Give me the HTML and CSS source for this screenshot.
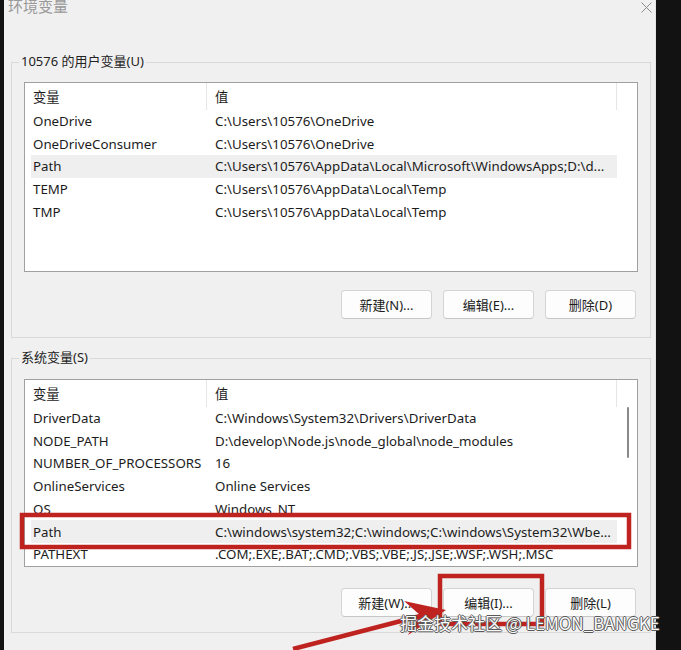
FILE: index.html
```html
<!DOCTYPE html>
<html lang="zh-CN">
<head>
<meta charset="utf-8">
<title>环境变量</title>
<link rel="stylesheet" href="styles.css">
</head>
<body>
<div class="window">
  <div class="titlebar">
    <span class="title">环境变量</span>
    <svg class="close" width="11" height="11" viewBox="0 0 11 11"><path d="M0.5 0.5 L10.5 10.5 M10.5 0.5 L0.5 10.5" stroke="#8c8c8c" stroke-width="1" fill="none"/></svg>
  </div>

  <div class="group group-user">
    <div class="legend">10576 的用户变量(U)</div>
    <div class="list list-user">
      <div class="list-head">
        <div class="hcell hcell-name">变量</div>
        <div class="hcell hcell-value">值</div>
      </div>
      <div class="list-body">
        <div class="rows">
          <div class="row"><span class="c1">OneDrive</span><span class="c2">C:\Users\10576\OneDrive</span></div>
          <div class="row"><span class="c1">OneDriveConsumer</span><span class="c2">C:\Users\10576\OneDrive</span></div>
          <div class="row sel"><span class="c1">Path</span><span class="c2">C:\Users\10576\AppData\Local\Microsoft\WindowsApps;D:\d...</span></div>
          <div class="row"><span class="c1">TEMP</span><span class="c2">C:\Users\10576\AppData\Local\Temp</span></div>
          <div class="row"><span class="c1">TMP</span><span class="c2">C:\Users\10576\AppData\Local\Temp</span></div>
        </div>
        <div class="scroll"></div>
      </div>
    </div>
    <div class="buttons buttons-user">
      <button class="btn">新建(N)...</button>
      <button class="btn">编辑(E)...</button>
      <button class="btn">删除(D)</button>
    </div>
  </div>

  <div class="group group-sys">
    <div class="legend">系统变量(S)</div>
    <div class="list list-sys">
      <div class="list-head">
        <div class="hcell hcell-name">变量</div>
        <div class="hcell hcell-value">值</div>
      </div>
      <div class="list-body">
        <div class="rows">
          <div class="row"><span class="c1">DriverData</span><span class="c2">C:\Windows\System32\Drivers\DriverData</span></div>
          <div class="row"><span class="c1">NODE_PATH</span><span class="c2">D:\develop\Node.js\node_global\node_modules</span></div>
          <div class="row"><span class="c1">NUMBER_OF_PROCESSORS</span><span class="c2">16</span></div>
          <div class="row"><span class="c1">OnlineServices</span><span class="c2">Online Services</span></div>
          <div class="row"><span class="c1">OS</span><span class="c2">Windows_NT</span></div>
          <div class="row sel"><span class="c1">Path</span><span class="c2">C:\windows\system32;C:\windows;C:\windows\System32\Wbe...</span></div>
          <div class="row"><span class="c1">PATHEXT</span><span class="c2">.COM;.EXE;.BAT;.CMD;.VBS;.VBE;.JS;.JSE;.WSF;.WSH;.MSC</span></div>
        </div>
        <div class="scroll"><div class="thumb"></div></div>
      </div>
    </div>
    <div class="buttons buttons-sys">
      <button class="btn">新建(W)...</button>
      <button class="btn">编辑(I)...</button>
      <button class="btn">删除(L)</button>
    </div>
  </div>
</div>

<svg class="annot" width="681" height="650" viewBox="0 0 681 650">
  <rect x="22" y="515" width="607" height="32" fill="none" stroke="#bf2320" stroke-width="4.5"/>
  <rect x="440" y="576" width="102" height="48" fill="none" stroke="#bf2320" stroke-width="4.5"/>
  <line x1="293" y1="649" x2="428" y2="614" stroke="#bf2320" stroke-width="4.5"/>
  <polygon points="446,610 404,601 420,615 408,635" fill="#bf2320"/>
</svg>
<div class="watermark">掘金技术社区 @ LEMON_BANGKE</div>
</body>
</html>
```
FILE: styles.css
```css
html, body {
  margin: 0;
  padding: 0;
}
body {
  width: 681px;
  height: 650px;
  overflow: hidden;
  position: relative;
  background: #121212;
  font-family: "Noto Sans", "Noto Sans CJK SC", sans-serif;
  font-size: 13px;
  color: #1c1c1c;
}
.window {
  margin-left: 4px;
  width: 652px;
  height: 650px;
  background: #f0f0f0;
  box-sizing: border-box;
  border-right: 1px solid #e4e4e4;
}
.titlebar {
  height: 62px;
  display: flex;
  justify-content: space-between;
  align-items: flex-start;
}
.title {
  margin-top: -4px;
  margin-left: 4px;
  font-size: 15px;
  line-height: 20px;
  color: #9a9a9a;
}
.close {
  margin-top: 2px;
  margin-right: 3px;
}
.group {
  margin-left: 7px;
  width: 640px;
  box-sizing: border-box;
  border: 1px solid #d9d9d9;
  padding: 0 12px;
}
.group-user {
  padding-bottom: 18px;
}
.group-sys {
  margin-top: 20px;
  padding-bottom: 15px;
}
.legend {
  display: block;
  width: fit-content;
  margin-top: -10px;
  margin-left: -5px;
  padding: 0 2px;
  height: 16px;
  line-height: 16px;
  background: #f0f0f0;
  color: #222;
}
.list {
  width: 614px;
  box-sizing: border-box;
  border: 1px solid #a0a0a0;
  background: #fff;
  overflow: hidden;
  font-size: 13.3px;
}
.list-user {
  margin-top: 13px;
  height: 190px;
}
.list-sys {
  margin-top: 14px;
  height: 188px;
}
.list-head {
  display: flex;
  height: 26.5px;
}
.hcell {
  box-sizing: border-box;
  padding-left: 8px;
  display: flex;
  align-items: center;
  border-right: 1px solid #e6e6e6;
}
.hcell-name {
  width: 182px;
}
.hcell-value {
  width: 410px;
}
.list-body {
  display: flex;
}
.rows {
  width: 592px;
  box-sizing: border-box;
  padding-left: 6px;
}
.row {
  display: grid;
  grid-template-columns: 176px 410px;
  height: 22.75px;
  align-items: center;
  white-space: nowrap;
}
.row.sel {
  background: #efefef;
}
.c1 {
  padding-left: 2px;
  overflow: hidden;
}
.c2 {
  padding-left: 8px;
  overflow: hidden;
}
.scroll {
  width: 20px;
  display: flex;
  justify-content: center;
}
.thumb {
  margin-top: 0.5px;
  width: 2px;
  height: 51px;
  border-radius: 1px;
  background: #8a8a8a;
  margin-left: 1px;
}
.buttons {
  display: flex;
  justify-content: flex-end;
  gap: 11px;
  padding-right: 2px;
}
.buttons-user {
  margin-top: 18px;
}
.buttons-sys {
  margin-top: 21px;
}
.btn {
  width: 91px;
  height: 29px;
  box-sizing: border-box;
  background: #fdfdfd;
  border: 1px solid #d4d4d4;
  border-bottom-color: #c6c6c6;
  border-radius: 4px;
  font-family: "Noto Sans", "Noto Sans CJK SC", sans-serif;
  font-size: 13px;
  color: #1b1b1b;
  padding: 0;
}
.annot {
  position: absolute;
  left: 0;
  top: 0;
  pointer-events: none;
}
.watermark {
  position: absolute;
  left: 400px;
  top: 613px;
  font-family: "Noto Sans CJK SC", "Noto Sans", sans-serif;
  font-size: 17px;
  line-height: 20px;
  white-space: nowrap;
  color: #fafafa;
  text-shadow: 1px 0 0 #5a5a5a, -1px 0 0 #5a5a5a, 0 1px 0 #5a5a5a, 0 -1px 0 #5a5a5a;
}
```
